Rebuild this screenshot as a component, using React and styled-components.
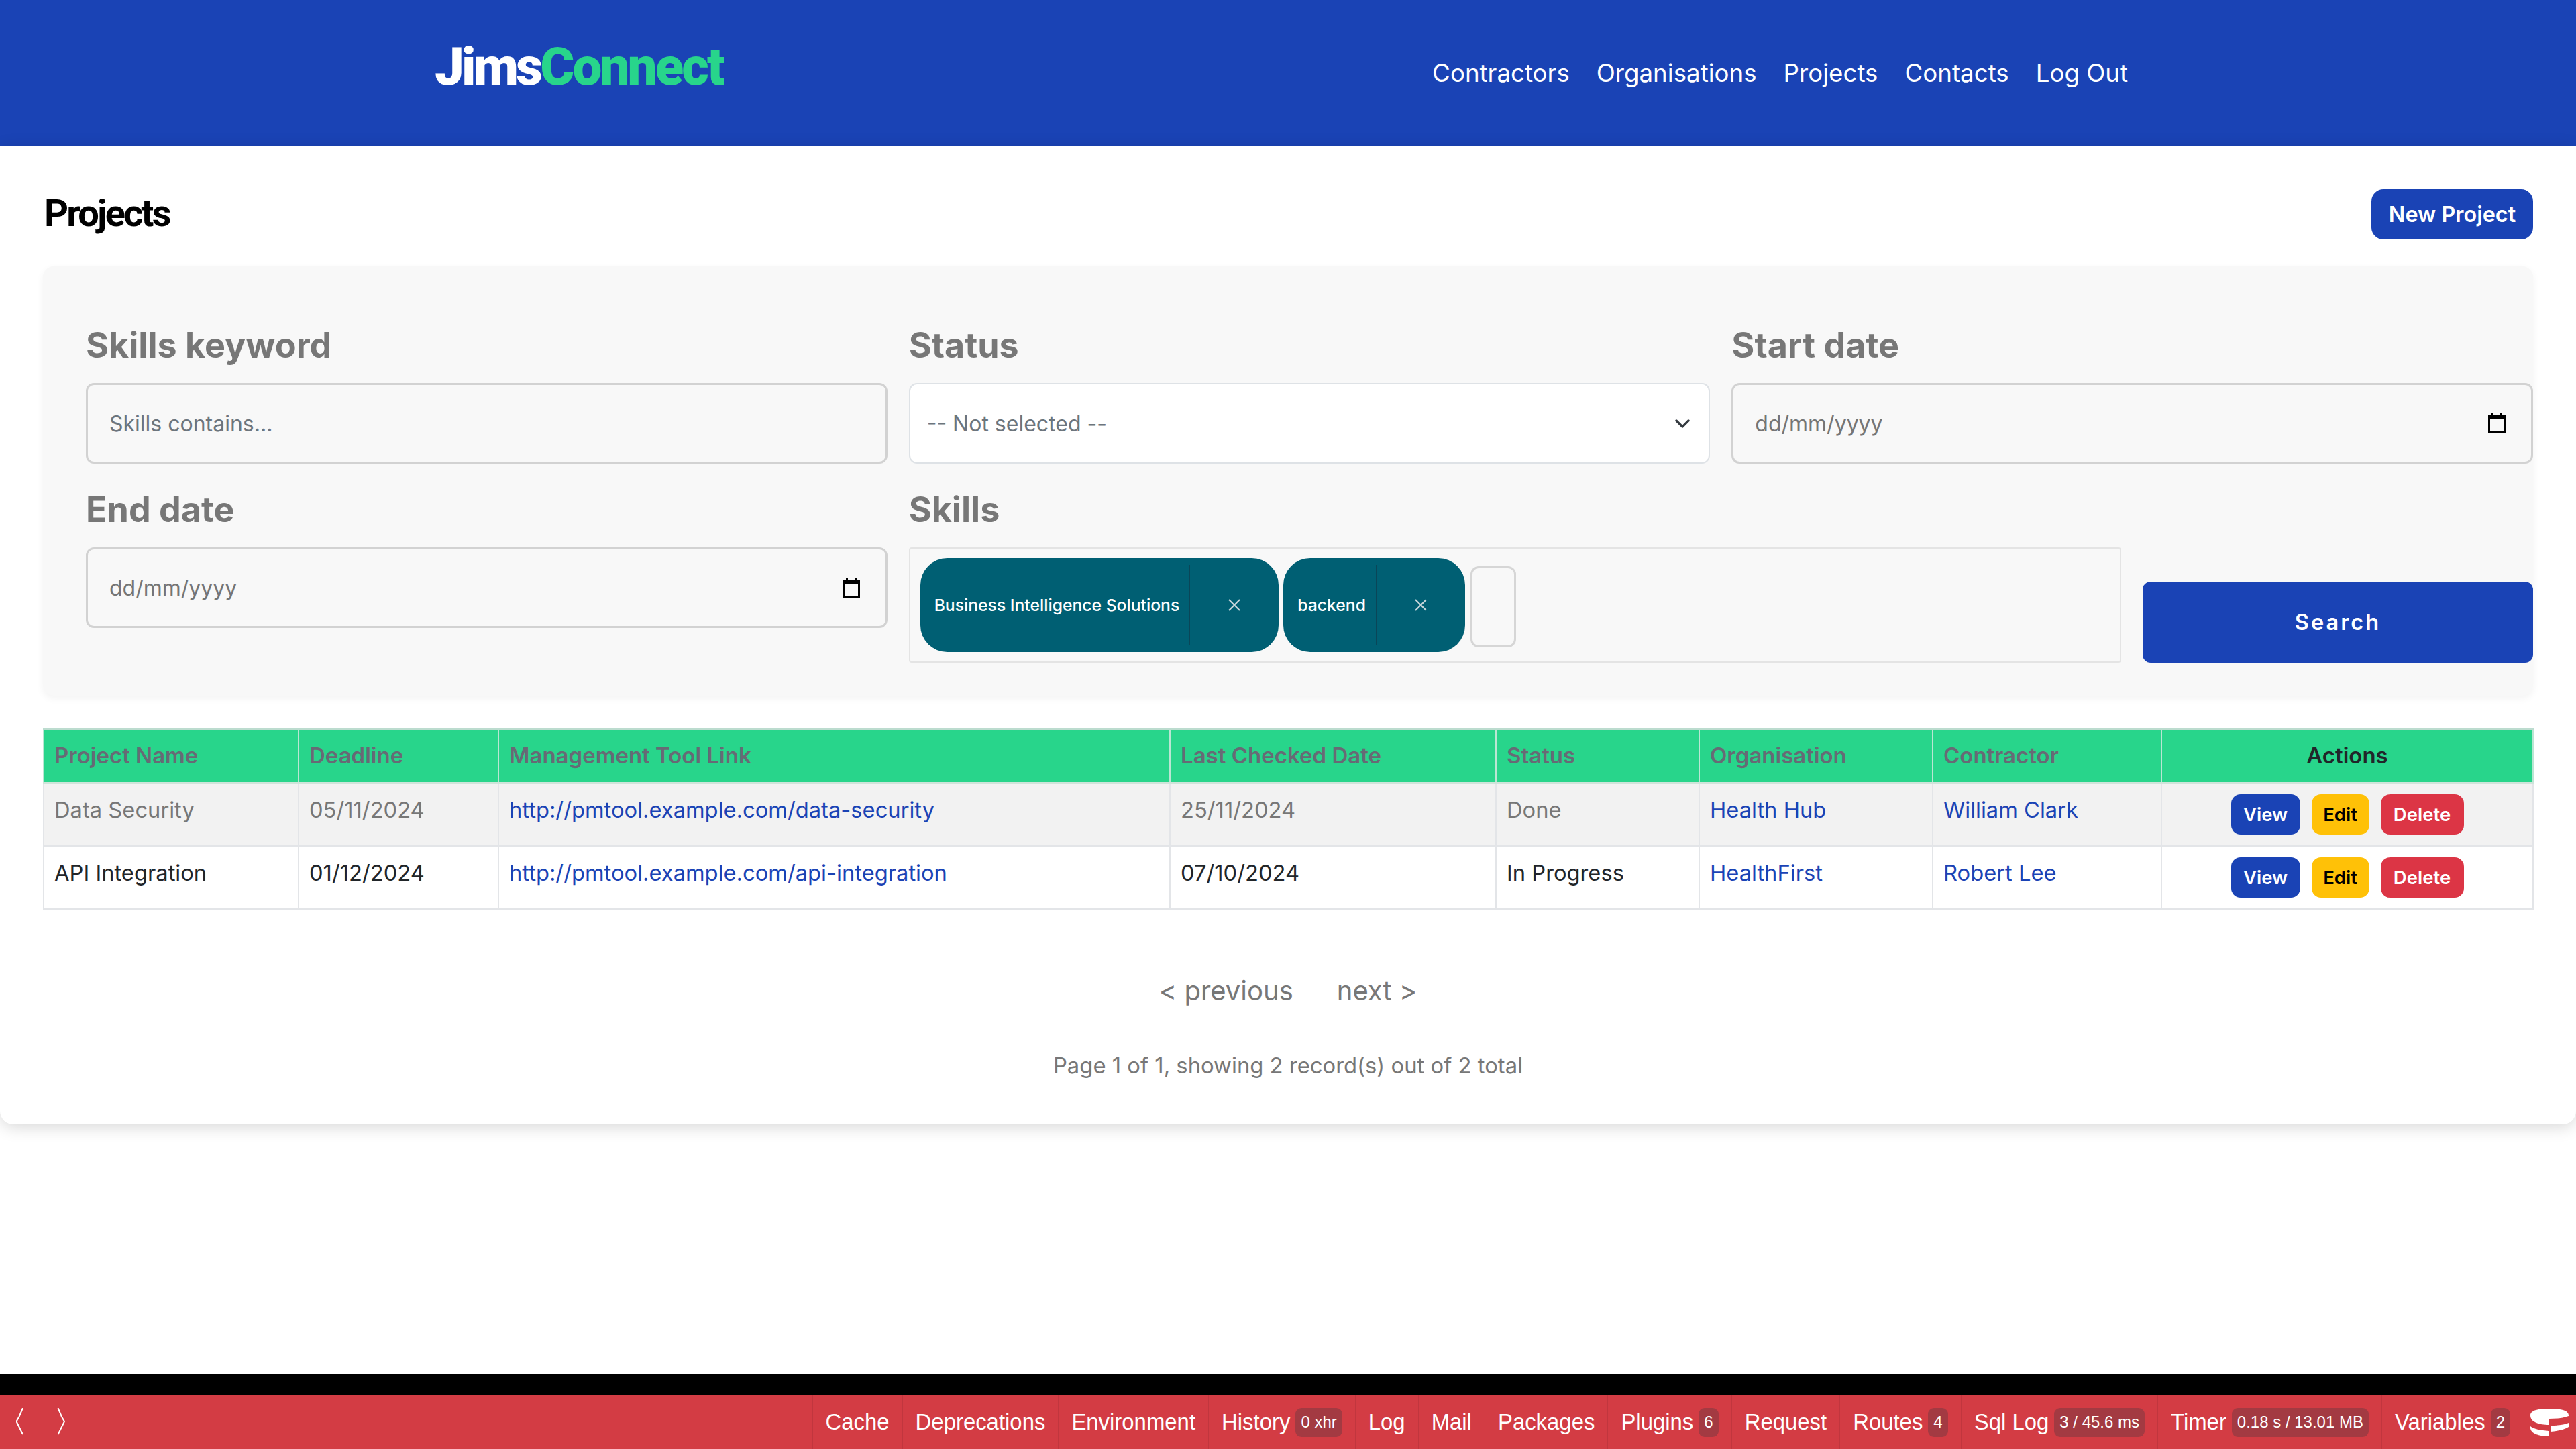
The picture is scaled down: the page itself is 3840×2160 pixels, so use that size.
import { createGlobalStyle, styled } from "styled-components";

const GlobalStyle = createGlobalStyle`
  html, body {
    margin: 0;
    padding: 0;
    background: #fff;
  }
  body {
    font-family: Inter, "Liberation Sans", sans-serif;
    color: #212529;
  }
  * {
    box-sizing: border-box;
  }
`;

const Page = styled.div`
  height: 2160px;
  display: flex;
  flex-direction: column;
  overflow: hidden;
`;

const Navbar = styled.header`
  height: 218px;
  flex: none;
  background: #1a43b5;
  display: flex;
  align-items: center;
  justify-content: space-between;
  padding: 0 668px 0 648px;
`;

const Logo = styled.a`
  font-family: Roboto, sans-serif;
  font-weight: 900;
  font-size: 78px;
  letter-spacing: -3.8px;
  line-height: 1;
  color: #fff;
  margin-top: -18px;

  span {
    color: #28d58b;
    letter-spacing: -2.9px;
  }
`;

const Nav = styled.nav`
  display: flex;
  gap: 40px;
`;

const NavLink = styled.a`
  color: #fff;
  font-size: 36.7px;
  line-height: 1;
`;

const Card = styled.main`
  flex: none;
  height: 1458px;
  padding: 64px 64px 0;
  background: #fff;
  border-radius: 0 0 20px 20px;
  box-shadow: 0 4px 24px rgba(0, 0, 0, 0.16);
`;

const TitleRow = styled.div`
  height: 115px;
  display: flex;
  align-items: flex-start;
  justify-content: space-between;
`;

const Title = styled.h1`
  margin: 0 0 0 2px;
  font-family: Roboto, sans-serif;
  font-weight: 700;
  font-size: 56px;
  letter-spacing: -2.8px;
  line-height: 72px;
  color: #000;
`;

const NewButton = styled.button`
  width: 241px;
  height: 75px;
  border: none;
  border-radius: 18px;
  background: #1a43b5;
  color: #fff;
  font: 600 32.4px Inter, sans-serif;
`;

const FilterPanel = styled.form`
  height: 640px;
  padding: 88px 0 0 64px;
  background: #f8f8f8;
  border-radius: 16px;
  box-shadow: 0 4px 12px rgba(0, 0, 0, 0.05);
`;

const TopRow = styled.div`
  display: grid;
  grid-template-columns: repeat(3, 1fr);
  gap: 32px;
  margin-bottom: 39px;
`;

const BottomRow = styled.div`
  display: grid;
  grid-template-columns: 1194.67px 1fr 582px;
  gap: 32px;
  align-items: end;
`;

const Field = styled.div`
  display: flex;
  flex-direction: column;
  align-self: start;
`;

const Label = styled.label`
  height: 62px;
  margin-bottom: 24px;
  font-weight: 700;
  font-size: 52px;
  line-height: 60px;
  color: #777;
`;

const TextBox = styled.input`
  height: 120px;
  padding: 0 32px;
  background: #f8f8f8;
  border: 3px solid #d2d2d2;
  border-radius: 12px;
  font: 400 32px Inter, sans-serif;
  color: #6c757d;
  outline: none;

  &::placeholder {
    color: #6c757d;
    opacity: 1;
  }
`;

const DateBox = styled.div`
  height: 120px;
  padding: 0 38px 0 32px;
  display: flex;
  align-items: center;
  justify-content: space-between;
  background: #f8f8f8;
  border: 3px solid #d2d2d2;
  border-radius: 12px;
  font-size: 32px;
  color: #757575;
`;

const SelectBox = styled.div`
  height: 120px;
  padding: 0 28px 0 25px;
  display: flex;
  align-items: center;
  justify-content: space-between;
  background: #fff;
  border: 2px solid #dee2e6;
  border-radius: 12px;
  font-size: 32px;
  color: #6c757d;
`;

const SkillsBox = styled.div`
  height: 172px;
  padding: 15px;
  display: flex;
  align-items: center;
  gap: 7px;
  background: #f8f8f8;
  border: 2px solid #e4e4e4;
  border-radius: 4px;
`;

const Chip = styled.div`
  height: 140px;
  display: flex;
  align-items: center;
  background: #005f73;
  border-radius: 40px;
  color: #fff;
`;

const ChipLabel = styled.span`
  height: 120px;
  padding: 0 15px 0 21px;
  display: flex;
  align-items: center;
  border-right: 1px solid #0a4658;
  font-weight: 500;
  font-size: 24.7px;
  white-space: nowrap;
`;

const ChipRemove = styled.span`
  width: 132px;
  display: flex;
  justify-content: center;
  color: #c7d6da;

  svg {
    display: block;
  }
`;

const SkillInput = styled.input`
  width: 68px;
  height: 121px;
  margin: 5px 0 0 1px;
  background: #f8f8f8;
  border: 3px solid #d6d6d6;
  border-radius: 12px;
  outline: none;
`;

const SearchButton = styled.button`
  height: 121px;
  border: none;
  border-radius: 12px;
  background: #1a43b5;
  color: #fff;
  font: 600 32.5px Inter, sans-serif;
  letter-spacing: 3px;
`;

const Table = styled.table`
  width: 3711px;
  margin-top: 48px;
  border-collapse: collapse;
  table-layout: fixed;
  font-size: 32.7px;
`;

const HeadCell = styled.th`
  height: 80px;
  padding: 0 15px 2px;
  background: #28d58b;
  border: 2px solid #b9e6d3;
  border-top: 3px solid #bcdccf;
  border-bottom-color: #cfe4da;
  text-align: ${(props) => (props.$center ? "center" : "left")};
  font-weight: 600;
  font-size: 33px;
  color: ${(props) => (props.$center ? "#212529" : "#676a75")};
`;

const Row = styled.tr`
  background: ${(props) => (props.$muted ? "#f2f2f2" : "#fff")};
  color: ${(props) => (props.$muted ? "#777" : "#212529")};
`;

const Cell = styled.td`
  height: 94px;
  padding: 20px 15px 0;
  vertical-align: top;
  border: 2px solid #e3e5e8;
  line-height: 39px;
  white-space: nowrap;
`;

const ActionCell = styled(Cell)`
  padding: 16px 0 0;
`;

const Link = styled.a`
  color: #1a43b5;
`;

const Actions = styled.div`
  display: flex;
  justify-content: center;
  gap: 17px;
`;

const ActionButton = styled.button`
  height: 60px;
  padding: 0;
  width: ${(props) => props.$width}px;
  border: none;
  border-radius: 14px;
  background: ${(props) => props.$bg};
  color: ${(props) => props.$fg};
  font: 600 27.5px Inter, sans-serif;
`;

const Pager = styled.div`
  margin-top: 97px;
  display: flex;
  justify-content: center;
  gap: 65px;
  font-size: 40px;
  line-height: 48px;
  color: #777;
`;

const PageInfo = styled.p`
  margin: 67px 0 0;
  text-align: center;
  font-size: 32.8px;
  line-height: 40px;
  color: #777;
`;

const Spacer = styled.div`
  flex: 1;
`;

const BlackStrip = styled.div`
  flex: none;
  height: 32px;
  background: #000;
`;

const DebugBar = styled.footer`
  flex: none;
  height: 80px;
  display: flex;
  align-items: stretch;
  background: #d33c44;
  color: #fff;
  font-family: "Liberation Sans", sans-serif;
  font-size: 32.9px;
`;

const Arrows = styled.div`
  display: flex;
  align-items: center;
  gap: 49px;
  padding: 0 0 3px 24px;
  margin-right: auto;
`;

const DebugItem = styled.div`
  display: flex;
  align-items: center;
  gap: 8px;
  padding: 0 19px 0 19px;
  border-left: 1px solid #c1363e;
  white-space: nowrap;
`;

const Badge = styled.span`
  height: 43px;
  min-width: 29px;
  padding: 0 8px;
  display: flex;
  align-items: center;
  justify-content: center;
  background: #a33a42;
  border-radius: 9px;
  font-size: 24px;
`;

const DebugLogo = styled.svg`
  align-self: center;
  flex: none;
  margin: 0 9px 0 10px;
`;

const columns = [380, 298, 1001, 486, 303, 348, 341, 554];

const headers = [
  "Project Name",
  "Deadline",
  "Management Tool Link",
  "Last Checked Date",
  "Status",
  "Organisation",
  "Contractor",
];

const projects = [
  {
    name: "Data Security",
    deadline: "05/11/2024",
    link: "http://pmtool.example.com/data-security",
    checked: "25/11/2024",
    status: "Done",
    organisation: "Health Hub",
    contractor: "William Clark",
    muted: true,
  },
  {
    name: "API Integration",
    deadline: "01/12/2024",
    link: "http://pmtool.example.com/api-integration",
    checked: "07/10/2024",
    status: "In Progress",
    organisation: "HealthFirst",
    contractor: "Robert Lee",
  },
];

const debugItems = [
  ["Cache"],
  ["Deprecations"],
  ["Environment"],
  ["History", "0 xhr"],
  ["Log"],
  ["Mail"],
  ["Packages"],
  ["Plugins", "6"],
  ["Request"],
  ["Routes", "4"],
  ["Sql Log", "3 / 45.6 ms"],
  ["Timer", "0.18 s / 13.01 MB"],
  ["Variables", "2"],
];

function CalendarIcon() {
  return (
    <svg width="26" height="30" viewBox="0 0 26 30">
      <path d="M5 0h3v3h10V0h3v3h5v27H0V3h5z M3 9v18h20V9z" fill="#000" fillRule="evenodd" />
    </svg>
  );
}

function ChevronIcon() {
  return (
    <svg width="22" height="14" viewBox="0 0 22 14">
      <path d="M2 3l9 9 9-9" fill="none" stroke="#343a40" strokeWidth="3.4" strokeLinecap="round" strokeLinejoin="round" />
    </svg>
  );
}

function RemoveIcon() {
  return (
    <svg width="20" height="20" viewBox="0 0 20 20">
      <path d="M2 2l16 16M18 2L2 18" stroke="currentColor" strokeWidth="2.2" />
    </svg>
  );
}

function SkillChip({ label }) {
  return (
    <Chip>
      <ChipLabel>{label}</ChipLabel>
      <ChipRemove>
        <RemoveIcon />
      </ChipRemove>
    </Chip>
  );
}

export default function App() {
  return (
    <Page>
      <GlobalStyle />
      <Navbar>
        <Logo>
          Jims<span>Connect</span>
        </Logo>
        <Nav>
          <NavLink>Contractors</NavLink>
          <NavLink>Organisations</NavLink>
          <NavLink>Projects</NavLink>
          <NavLink>Contacts</NavLink>
          <NavLink>Log Out</NavLink>
        </Nav>
      </Navbar>

      <Card>
        <TitleRow>
          <Title>Projects</Title>
          <NewButton type="button">New Project</NewButton>
        </TitleRow>

        <FilterPanel>
          <TopRow>
            <Field>
              <Label>Skills keyword</Label>
              <TextBox placeholder="Skills contains..." />
            </Field>
            <Field>
              <Label>Status</Label>
              <SelectBox>
                -- Not selected --
                <ChevronIcon />
              </SelectBox>
            </Field>
            <Field>
              <Label>Start date</Label>
              <DateBox>
                dd/mm/yyyy
                <CalendarIcon />
              </DateBox>
            </Field>
          </TopRow>
          <BottomRow>
            <Field>
              <Label>End date</Label>
              <DateBox>
                dd/mm/yyyy
                <CalendarIcon />
              </DateBox>
            </Field>
            <Field>
              <Label>Skills</Label>
              <SkillsBox>
                <SkillChip label="Business Intelligence Solutions" />
                <SkillChip label="backend" />
                <SkillInput />
              </SkillsBox>
            </Field>
            <SearchButton type="button">Search</SearchButton>
          </BottomRow>
        </FilterPanel>

        <Table>
          <colgroup>
            {columns.map((width, index) => (
              <col key={index} width={width} />
            ))}
          </colgroup>
          <thead>
            <tr>
              {headers.map((header) => (
                <HeadCell key={header}>{header}</HeadCell>
              ))}
              <HeadCell $center>Actions</HeadCell>
            </tr>
          </thead>
          <tbody>
            {projects.map((project) => (
              <Row key={project.name} $muted={project.muted}>
                <Cell>{project.name}</Cell>
                <Cell>{project.deadline}</Cell>
                <Cell>
                  <Link>{project.link}</Link>
                </Cell>
                <Cell>{project.checked}</Cell>
                <Cell>{project.status}</Cell>
                <Cell>
                  <Link>{project.organisation}</Link>
                </Cell>
                <Cell>
                  <Link>{project.contractor}</Link>
                </Cell>
                <ActionCell>
                  <Actions>
                    <ActionButton $width={103} $bg="#1a43b5" $fg="#fff">View</ActionButton>
                    <ActionButton $width={86} $bg="#ffc107" $fg="#000">Edit</ActionButton>
                    <ActionButton $width={124} $bg="#dc3545" $fg="#fff">Delete</ActionButton>
                  </Actions>
                </ActionCell>
              </Row>
            ))}
          </tbody>
        </Table>

        <Pager>
          <span>&lt; previous</span>
          <span>next &gt;</span>
        </Pager>
        <PageInfo>Page 1 of 1, showing 2 record(s) out of 2 total</PageInfo>
      </Card>

      <Spacer />
      <BlackStrip />
      <DebugBar>
        <Arrows>
          <svg width="12" height="40" viewBox="0 0 12 40">
            <path d="M10 0L4.500 13 .5 20l4 8L10 39" fill="none" stroke="#fff" strokeWidth="2" />
          </svg>
          <svg width="12" height="40" viewBox="0 0 12 40">
            <path d="M1.500 0L7 13l4 7-4 8-5.500 11" fill="none" stroke="#fff" strokeWidth="2" />
          </svg>
        </Arrows>
        {debugItems.map(([label, badge]) => (
          <DebugItem key={label}>
            {label}
            {badge && <Badge>{badge}</Badge>}
          </DebugItem>
        ))}
        <DebugLogo width="60" height="45" viewBox="0 0 60 45">
          <path d="M1 12C1 4 14 2 29 2s29 2 29 10v1c-8 3-18 4-29 4v9C14 26 1 22 1 12z" fill="#fff" />
          <path d="M31 27c11 0 21-1 27-4v6c-6 4-16 6-27 7z" fill="#fff" />
          <path d="M1 28c5 4 15 6 28 7v8C14 43 1 39 1 30z" fill="#fff" />
        </DebugLogo>
      </DebugBar>
    </Page>
  );
}
